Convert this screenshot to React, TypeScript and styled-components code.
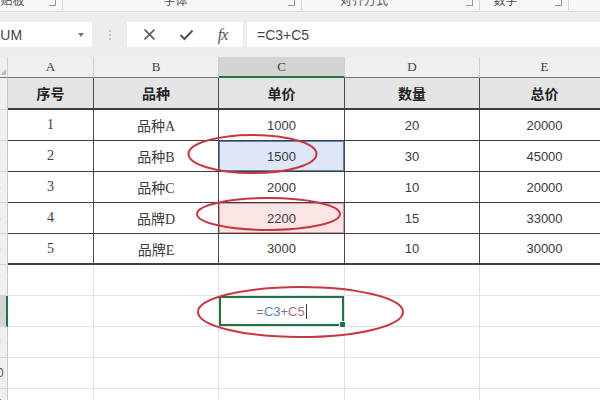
import React from "react";
import styled, { createGlobalStyle, css } from "styled-components";

const Global = createGlobalStyle`
  html, body { margin: 0; padding: 0; background: #fff; }
  body { width: 600px; height: 400px; overflow: hidden; font-family: "Liberation Sans", "Noto Sans CJK SC", sans-serif; }
  #root { width: 600px; height: 400px; position: relative; overflow: hidden; }
`;

const Page = styled.div`
  width: 600px;
  height: 400px;
  display: flex;
  flex-direction: column;
  position: relative;
  overflow: hidden;
`;

/* ---------- Ribbon group labels ---------- */
const Ribbon = styled.div`
  height: 11px;
  display: flex;
  background: #f7f7f7;
  border-bottom: 1px solid #dcdcdc;
  overflow: hidden;
  flex-shrink: 0;
`;

const Group = styled.div<{ $w: number }>`
  width: ${(p) => p.$w}px;
  flex-shrink: 0;
  display: flex;
  align-items: flex-end;
  position: relative;
  border-right: 1px solid #d6d6d6;
  height: 10px;
`;

const GroupLabel = styled.span<{ $shift?: number }>`
  flex: 1;
  text-align: center;
  font-family: "Noto Sans CJK SC", sans-serif;
  font-size: 12px;
  line-height: 16px;
  color: #555;
  margin-top: -8px;
  transform: translateX(${(p) => p.$shift ?? 0}px);
  align-self: flex-start;
  white-space: nowrap;
`;

const Launcher = styled.span`
  width: 6px;
  height: 5px;
  border-right: 1px solid #999;
  border-bottom: 1px solid #999;
  margin: 0 6px 3px 0;
  align-self: flex-start;
  margin-top: 0px;
`;

/* ---------- Formula bar ---------- */
const FormulaBar = styled.div`
  height: 45px;
  background: #ededed;
  display: flex;
  align-items: center;
  padding: 0 0 0 0;
  flex-shrink: 0;
`;

const NameBox = styled.div`
  margin-left: -12px;
  width: 104px;
  height: 25px;
  background: #fff;
  display: flex;
  align-items: center;
  justify-content: space-between;
  padding: 0 6px 0 3px;
  box-sizing: border-box;
  font-family: "Liberation Sans", sans-serif;
  font-size: 14px;
  color: #444;
`;

const Caret = styled.span`
  width: 0;
  height: 0;
  border-left: 3px solid transparent;
  border-right: 3px solid transparent;
  border-top: 4px solid #777;
  margin-right: 2px;
`;

const Dots = styled.div`
  width: 35px;
  display: flex;
  flex-direction: column;
  align-items: center;
  gap: 2px;
  span {
    width: 2px;
    height: 2px;
    background: #b5b5b5;
    border-radius: 1px;
  }
`;

const IconBox = styled.div`
  width: 116px;
  height: 25px;
  background: #fff;
  display: flex;
  align-items: center;
  justify-content: space-around;
  padding: 0 4px;
  box-sizing: border-box;
`;

const Fx = styled.span`
  font-family: "Liberation Serif", serif;
  font-style: italic;
  font-size: 16px;
  color: #555;
  letter-spacing: -1px;
`;

const FormulaInput = styled.div`
  flex: 1;
  height: 25px;
  margin-left: 4px;
  background: #fff;
  display: flex;
  align-items: center;
  padding-left: 10px;
  font-family: "Liberation Sans", sans-serif;
  font-size: 14px;
  color: #444;
`;

const Spacer = styled.div`
  height: 0px;
`;

/* ---------- Sheet ---------- */
const Sheet = styled.div`
  display: grid;
  grid-template-columns: 8px 86px 125px 126px 135px 130px;
  grid-auto-rows: 31px;
  grid-template-rows: 21px 32px;
  position: relative;
`;

const ColHead = styled.div<{ $active?: boolean }>`
  background: ${(p) => (p.$active ? "#d4d4d4" : "#efefef")};
  border-right: 1px solid #cfcfcf;
  border-bottom: ${(p) => (p.$active ? "2px solid #217346" : "1px solid #777")};
  display: flex;
  align-items: center;
  justify-content: center;
  font-family: "Liberation Serif", serif;
  font-size: 13px;
  color: #444;
  box-sizing: border-box;
`;

const Corner = styled.div`
  background: #efefef;
  border-right: 1px solid #cfcfcf;
  border-bottom: 1px solid #777;
  box-sizing: border-box;
  position: relative;
  overflow: hidden;
  &::after {
    content: "";
    position: absolute;
    right: 1px;
    bottom: 2px;
    border-left: 6px solid transparent;
    border-bottom: 6px solid #bcbcbc;
  }
`;

const RowHead = styled.div<{ $active?: boolean }>`
  background: ${(p) => (p.$active ? "#d4d4d4" : "#efefef")};
  border-right: ${(p) => (p.$active ? "2px solid #217346" : "1px solid #c8c8c8")};
  border-bottom: 1px solid #d8d8d8;
  box-sizing: border-box;
  overflow: hidden;
  display: flex;
  align-items: center;
  span {
    display: block;
    width: 30px;
    margin-left: -18px;
    flex-shrink: 0;
    text-align: center;
    font-family: "Liberation Sans", sans-serif;
    font-size: 12px;
    color: #555;
  }
`;

type Tone = "none" | "blue" | "pink";

const Cell = styled.div<{ $head?: boolean; $last?: boolean; $serif?: boolean; $tone?: Tone }>`
  border-right: 1px solid #4a4a4a;
  border-bottom: ${(p) => (p.$head || p.$last ? "2px" : "1px")} solid #3f3f3f;
  box-sizing: border-box;
  display: flex;
  align-items: center;
  justify-content: center;
  color: #3a3a3a;
  ${(p) =>
    p.$head
      ? css`
          background: #e4e4e4;
          font-family: "Noto Sans CJK SC", sans-serif;
          font-weight: 700;
          font-size: 14px;
          color: #222;
        `
      : p.$serif
      ? css`
          font-family: "Liberation Serif", "Noto Sans CJK SC", serif;
          font-size: 14px;
        `
      : css`
          font-family: "Liberation Sans", sans-serif;
          font-size: 13px;
        `}
  ${(p) =>
    p.$tone === "blue" &&
    css`
      background: #dee7f5;
      box-shadow: inset 0 0 0 1px #5f7fbf;
    `}
  ${(p) =>
    p.$tone === "pink" &&
    css`
      background: #fae4e4;
      box-shadow: inset 0 0 0 1px #d89a9a;
    `}
`;

const EmptyCell = styled.div`
  border-right: 1px solid #e1e1e1;
  border-bottom: 1px solid #e1e1e1;
  box-sizing: border-box;
`;

const EditCell = styled.div`
  border-right: 1px solid #e1e1e1;
  border-bottom: 1px solid #e1e1e1;
  box-sizing: border-box;
  box-shadow: inset 0 0 0 2px #217346;
  display: flex;
  align-items: center;
  justify-content: center;
  font-family: "Liberation Sans", sans-serif;
  font-size: 13px;
  color: #777;
  position: relative;
`;

const Handle = styled.span`
  position: absolute;
  right: -2px;
  bottom: -2px;
  width: 5px;
  height: 5px;
  background: #217346;
  border: 1px solid #fff;
`;

const Ref = styled.span<{ $c: string }>`
  color: ${(p) => p.$c};
`;

const TextCaret = styled.span`
  display: inline-block;
  width: 1px;
  height: 15px;
  background: #333;
  margin-left: 1px;
`;

const Overlay = styled.svg`
  position: absolute;
  left: 0;
  top: 0;
  width: 600px;
  height: 400px;
  pointer-events: none;
`;

const rows = [
  ["1", "品种A", "1000", "20", "20000"],
  ["2", "品种B", "1500", "30", "45000"],
  ["3", "品种C", "2000", "10", "20000"],
  ["4", "品牌D", "2200", "15", "33000"],
  ["5", "品牌E", "3000", "10", "30000"],
];

const heads = ["序号", "品种", "单价", "数量", "总价"];
const letters = ["A", "B", "C", "D", "E"];

export default function App() {
  return (
    <Page>
      <Global />
      <Ribbon>
        <Group $w={62}>
          <GroupLabel $shift={-18}>剪贴板</GroupLabel>
          <Launcher />
        </Group>
        <Group $w={238}>
          <GroupLabel>字体</GroupLabel>
          <Launcher />
        </Group>
        <Group $w={177}>
          <GroupLabel $shift={-20}>对齐方式</GroupLabel>
          <Launcher />
        </Group>
        <Group $w={88}>
          <GroupLabel $shift={-12}>数字</GroupLabel>
          <Launcher />
        </Group>
      </Ribbon>
      <FormulaBar>
        <NameBox>
          <span>SUM</span>
          <Caret />
        </NameBox>
        <Dots>
          <span />
          <span />
          <span />
        </Dots>
        <IconBox>
          <svg width="13" height="13" viewBox="0 0 13 13">
            <path d="M1.5 1.5 L11.5 11.5 M11.5 1.5 L1.5 11.5" stroke="#555" strokeWidth="1.7" fill="none" />
          </svg>
          <svg width="15" height="12" viewBox="0 0 15 12">
            <path d="M1.5 6 L5.5 10 L13.5 1.5" stroke="#555" strokeWidth="2" fill="none" />
          </svg>
          <Fx>fx</Fx>
        </IconBox>
        <FormulaInput>=C3+C5</FormulaInput>
      </FormulaBar>
      <Spacer />
      <Sheet>
        <Corner />
        {letters.map((l) => (
          <ColHead key={l} $active={l === "C"}>
            {l}
          </ColHead>
        ))}
        <RowHead>
          <span>1</span>
        </RowHead>
        {heads.map((h) => (
          <Cell key={h} $head>
            {h}
          </Cell>
        ))}
        {rows.map((r, i) => (
          <React.Fragment key={i}>
            <RowHead>
              <span>{i + 2}</span>
            </RowHead>
            {r.map((v, j) => (
              <Cell
                key={j}
                $last={i === rows.length - 1}
                $serif={j < 2}
                $tone={j === 2 && i === 1 ? "blue" : j === 2 && i === 3 ? "pink" : "none"}
              >
                {v}
              </Cell>
            ))}
          </React.Fragment>
        ))}
        {[7, 8, 9, 10, 11].map((n) => (
          <React.Fragment key={n}>
            <RowHead $active={n === 8}>
              <span>{n}</span>
            </RowHead>
            {[0, 1, 2, 3, 4].map((j) =>
              n === 8 && j === 2 ? (
                <EditCell key={j}>
                  =<Ref $c="#5d7fc3">C3</Ref>+<Ref $c="#a9707c">C5</Ref>
                  <TextCaret />
                  <Handle />
                </EditCell>
              ) : (
                <EmptyCell key={j} />
              )
            )}
          </React.Fragment>
        ))}
      </Sheet>
      <Overlay viewBox="0 0 600 400">
        <g fill="none" stroke="#c73641" strokeWidth="2">
          <ellipse cx="252.5" cy="154" rx="64" ry="19" />
          <ellipse cx="268.5" cy="214" rx="71.5" ry="16" />
          <ellipse cx="300.5" cy="312" rx="102.5" ry="25" />
        </g>
      </Overlay>
    </Page>
  );
}
